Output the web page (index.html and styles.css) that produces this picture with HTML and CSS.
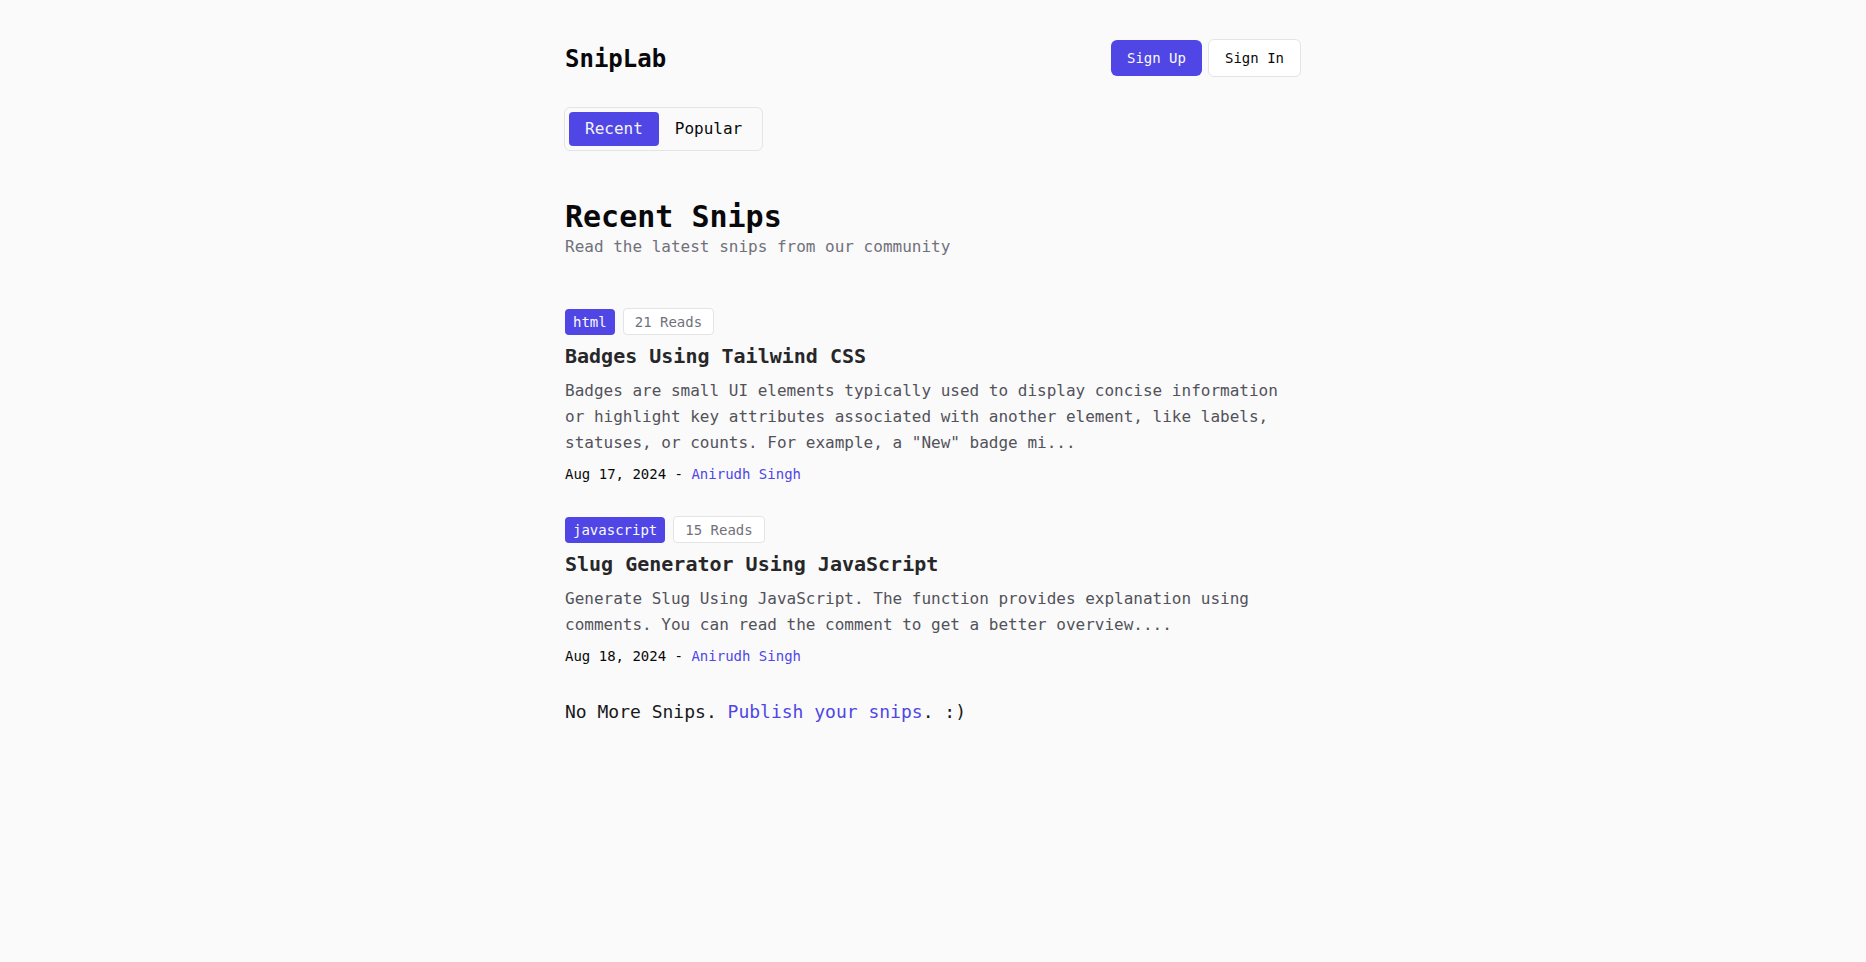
FILE: index.html
```html
<!DOCTYPE html>
<html lang="en">
<head>
<meta charset="utf-8">
<title>SnipLab</title>
<link rel="stylesheet" href="styles.css">
</head>
<body>
<div class="page">
  <header class="header">
    <a class="brand" href="#">SnipLab</a>
    <nav class="actions">
      <a class="btn btn-primary" href="#">Sign Up</a>
      <a class="btn btn-outline" href="#">Sign In</a>
    </nav>
  </header>

  <div class="tabs">
    <button class="tab tab-active">Recent</button>
    <button class="tab">Popular</button>
  </div>

  <section class="intro">
    <h1 class="intro-title">Recent Snips</h1>
    <p class="intro-sub">Read the latest snips from our community</p>
  </section>

  <section class="snips">
    <article class="snip">
      <div class="badges">
        <span class="tag">html</span>
        <span class="reads">21 Reads</span>
      </div>
      <h2 class="snip-title">Badges Using Tailwind CSS</h2>
      <p class="snip-desc">Badges are small UI elements typically used to display concise information or highlight key attributes associated with another element, like labels, statuses, or counts. For example, a "New" badge mi...</p>
      <p class="snip-meta">Aug 17, 2024 - <a href="#">Anirudh Singh</a></p>
    </article>
    <article class="snip">
      <div class="badges">
        <span class="tag">javascript</span>
        <span class="reads">15 Reads</span>
      </div>
      <h2 class="snip-title">Slug Generator Using JavaScript</h2>
      <p class="snip-desc">Generate Slug Using JavaScript. The function provides explanation using comments. You can read the comment to get a better overview....</p>
      <p class="snip-meta">Aug 18, 2024 - <a href="#">Anirudh Singh</a></p>
    </article>
  </section>

  <p class="end-note">No More Snips. <a href="#">Publish your snips</a>. :)</p>
</div>
</body>
</html>
```

FILE: styles.css
```css
* { box-sizing: border-box; }

html, body {
  margin: 0;
  padding: 0;
  background: #fafafa;
}

body {
  font-family: "DejaVu Sans Mono", "Liberation Mono", monospace;
  color: #18181b;
}

a { text-decoration: none; }

.page {
  max-width: 736px;
  margin: 0 auto;
  padding-top: 39px;
  padding-bottom: 40px;
}

.header {
  display: flex;
  justify-content: space-between;
  align-items: center;
  height: 38px;
}

.brand {
  font-size: 24px;
  line-height: 32px;
  font-weight: 700;
  color: #09090b;
  padding-top: 2px;
}

.actions {
  display: flex;
  align-items: center;
  gap: 6px;
  padding-left: 1px;
}

.btn {
  display: inline-block;
  font-size: 14px;
  line-height: 20px;
  padding: 8px 16px;
  border-radius: 6px;
}

.btn-primary {
  background: #4f46e5;
  color: #fafafa;
}

.btn-outline {
  background: #ffffff;
  color: #09090b;
  border: 1px solid #e4e4e7;
}

.tabs {
  margin-top: 30px;
  margin-left: -1px;
  display: inline-flex;
  border: 1px solid #e4e4e7;
  border-radius: 6px;
  padding: 4px;
  background: #fafafa;
}

.tab {
  font-family: inherit;
  font-size: 16px;
  line-height: 24px;
  padding: 5px 16px;
  border: none;
  border-radius: 4px;
  background: transparent;
  color: #09090b;
  cursor: pointer;
}

.tab-active {
  background: #4f46e5;
  color: #f4f4f5;
}

.intro {
  margin-top: 48px;
}

.intro-title {
  margin: 0;
  font-size: 30px;
  line-height: 36px;
  font-weight: 700;
  color: #09090b;
}

.intro-sub {
  margin: 0;
  font-size: 16px;
  line-height: 24px;
  color: #71717a;
}

.snips {
  margin-top: 49px;
  display: flex;
  flex-direction: column;
  gap: 32px;
}

.badges {
  display: flex;
  align-items: center;
  gap: 8px;
}

.tag {
  background: #4f46e5;
  color: #fafafa;
  font-size: 14px;
  line-height: 20px;
  padding: 3px 8px;
  border-radius: 4px;
}

.reads {
  background: #ffffff;
  color: #71717a;
  border: 1px solid #e4e4e7;
  font-size: 14px;
  line-height: 20px;
  padding: 2.5px 11px;
  border-radius: 4px;
}

.snip-title {
  margin: 7px 0 0;
  font-size: 20px;
  line-height: 28px;
  font-weight: 700;
  color: #27272a;
}

.snip-desc {
  margin: 8px 0 0;
  font-size: 16px;
  line-height: 26px;
  color: #52525b;
}

.snip-meta {
  margin: 8px 0 0;
  font-size: 14px;
  line-height: 20px;
  color: #09090b;
}

.snip-meta a,
.end-note a {
  color: #4f46e5;
}

.end-note {
  margin: 32px 0 0;
  font-size: 18px;
  line-height: 28px;
  color: #18181b;
}
```
